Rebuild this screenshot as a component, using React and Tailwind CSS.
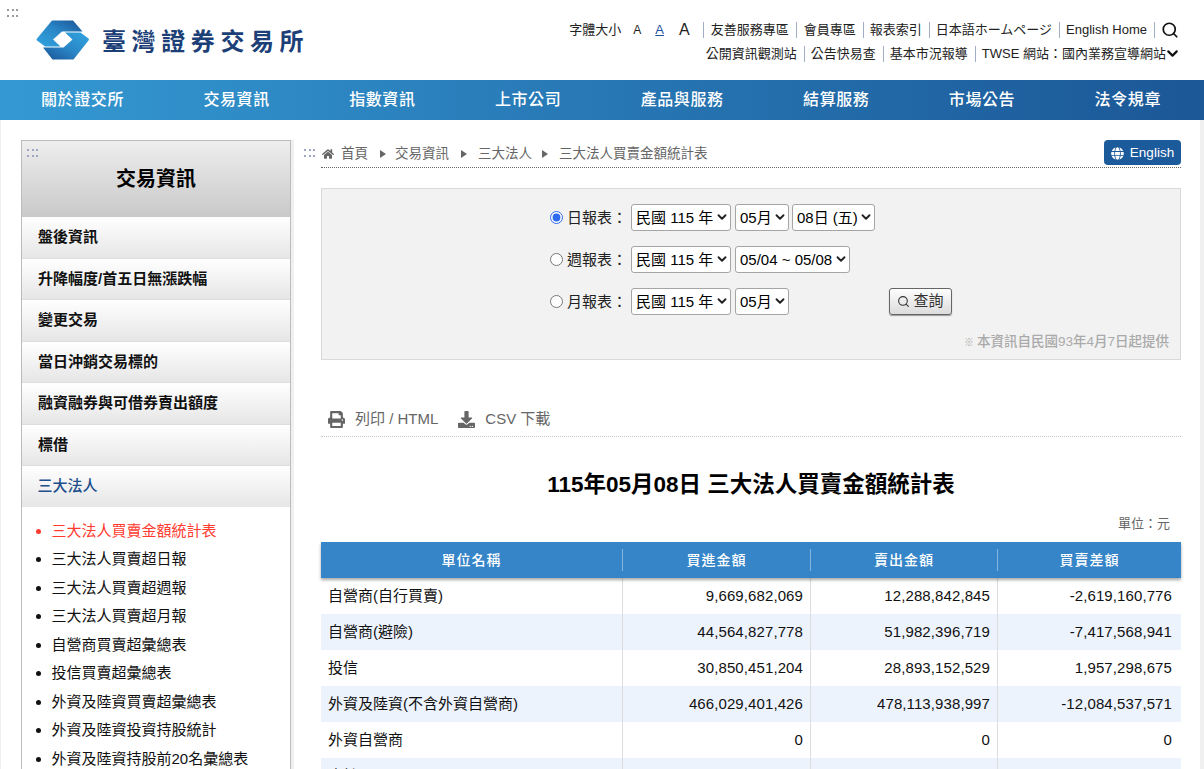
import React from "react";
import { Search, ChevronDown } from "lucide-react";
import { FaHome, FaPrint, FaDownload, FaGlobe } from "react-icons/fa";

function Dots({ color = "bg-[#9a9a9a]", className = "" }) {
  return (
    <div className={`grid grid-cols-3 gap-x-[2px] gap-y-[4px] w-[12px] ${className}`}>
      {[0, 1, 2, 3, 4, 5].map((i) => (
        <span key={i} className={`block w-[2px] h-[2px] ${color}`} />
      ))}
    </div>
  );
}

function Logo() {
  return (
    <svg width="54" height="40" viewBox="0 0 54 40" className="shrink-0">
      <defs>
        <linearGradient id="la" x1="0" y1="0.9" x2="0.85" y2="0">
          <stop offset="0" stopColor="#30a2de" />
          <stop offset="0.55" stopColor="#2a86c6" />
          <stop offset="1" stopColor="#1c5a9c" />
        </linearGradient>
        <linearGradient id="lb" x1="1" y1="0.1" x2="0.15" y2="1">
          <stop offset="0" stopColor="#30a2de" />
          <stop offset="0.55" stopColor="#2a86c6" />
          <stop offset="1" stopColor="#1c5a9c" />
        </linearGradient>
      </defs>
      <path d="M16 0.5L37 0.5L46.5 11.5L26 11.5L17 19.5L24.5 26.5L9 26.5L1 20.5Q0 19.5 1 18.5Z" fill="url(#la)" />
      <path d="M37.5 39.5L16.5 39.5L7 27.5L27.5 27.5L36.5 19.5L29 12.5L44.5 12.5L52.5 18.5Q53.5 19.5 52.5 20.5Z" fill="url(#lb)" />
    </svg>
  );
}

function Sep() {
  return <span className="block w-px h-[16px] bg-[#9fb0c6] ml-[7px] mr-[6px]" />;
}

function Sel({ children, width }) {
  return (
    <span className={`relative block h-[27px] ${width}`}>
      <select className="appearance-none block w-full h-full bg-white border border-[#a5a5a5] rounded-[3px] pl-[4px] text-[15px] leading-[25px] text-black">
        <option>{children}</option>
      </select>
      <ChevronDown size={14} strokeWidth={3.2} className="absolute right-[2px] top-[6px] text-[#222] pointer-events-none" />
    </span>
  );
}

function FormRow({ label, checked, children }) {
  return (
    <div className="flex items-center h-[27px] pl-[228px]">
      <input type="radio" name="rpt" defaultChecked={checked} className="w-[13px] h-[13px] m-0 accent-[#2f6bf0] shrink-0" />
      <span className="ml-[4px] w-[64px] pt-[1px] text-[15px] text-[#222] whitespace-nowrap">{label}</span>
      <div className="flex items-center">{children}</div>
    </div>
  );
}

const sideMain = ["盤後資訊", "升降幅度/首五日無漲跌幅", "變更交易", "當日沖銷交易標的", "融資融券與可借券賣出額度", "標借"];
const sideSub = ["三大法人買賣超日報", "三大法人買賣超週報", "三大法人買賣超月報", "自營商買賣超彙總表", "投信買賣超彙總表", "外資及陸資買賣超彙總表", "外資及陸資投資持股統計", "外資及陸資持股前20名彙總表"];
const nav = ["關於證交所", "交易資訊", "指數資訊", "上市公司", "產品與服務", "結算服務", "市場公告", "法令規章"];
const rows = [
  ["自營商(自行買賣)", "9,669,682,069", "12,288,842,845", "-2,619,160,776"],
  ["自營商(避險)", "44,564,827,778", "51,982,396,719", "-7,417,568,941"],
  ["投信", "30,850,451,204", "28,893,152,529", "1,957,298,675"],
  ["外資及陸資(不含外資自營商)", "466,029,401,426", "478,113,938,997", "-12,084,537,571"],
  ["外資自營商", "0", "0", "0"],
  ["合計", "551,114,362,477", "571,278,331,090", "-20,163,968,613"],
];
const cols = "grid grid-cols-[302px_188px_187px_183px]";

export default function App() {
  return (
    <div className="relative h-[769px] w-full overflow-hidden bg-white [font-family:'Liberation_Sans','Noto_Sans_CJK_TC',sans-serif]">
      <Dots className="absolute left-[7px] top-[9px]" />

      <header className="h-[80px] flex justify-between">
        <div className="flex items-center pl-[36px]">
          <Logo />
          <span className="ml-[12px] text-[24px] font-bold tracking-[5.6px] text-[#1c3f78] whitespace-nowrap [font-family:'Noto_Sans_CJK_TC',sans-serif]">臺灣證券交易所</span>
        </div>
        <div className="flex flex-col items-end pr-[26px] pt-[21px] text-[13px] text-[#222]">
          <div className="flex items-center h-[17px] whitespace-nowrap">
            <span>字體大小</span>
            <span className="ml-[12px] text-[12px]">A</span>
            <span className="ml-[14px] text-[13px] text-[#1f4f9c] underline">A</span>
            <span className="ml-[15px] text-[16px]">A</span>
            <span className="block w-px h-[16px] bg-[#9fb0c6] ml-[13px] mr-[7px]" />
            <span>友善服務專區</span>
            <span className="block w-px h-[16px] bg-[#9fb0c6] mx-[7px]" />
            <span>會員專區</span>
            <Sep />
            <span>報表索引</span>
            <Sep />
            <span>日本語ホームページ</span>
            <Sep />
            <span>English Home</span>
            <Sep />
            <Search size={18} strokeWidth={2.3} className="text-[#111] -mr-[1px]" />
          </div>
          <div className="flex items-center h-[17px] mt-[7px] whitespace-nowrap">
            <span>公開資訊觀測站</span>
            <Sep />
            <span>公告快易查</span>
            <Sep />
            <span>基本市況報導</span>
            <Sep />
            <span>TWSE 網站：國內業務宣導網站</span>
            <ChevronDown size={17} strokeWidth={3} className="-ml-[2px] -mr-[3px] text-[#111]" />
          </div>
        </div>
      </header>

      <nav className="h-[40px] flex items-center justify-between pl-[41px] pr-[43px] bg-gradient-to-r from-[#3499d2] to-[#1c5797] text-white text-[16px] font-medium tracking-[0.6px]">
        {nav.map((n) => (
          <span key={n} className="whitespace-nowrap">{n}</span>
        ))}
      </nav>

      <main className="h-[649px] bg-[#f0f0f0] pl-px pr-[4px]">
        <div className="h-full bg-white flex items-start pl-[20px] pt-[20px] overflow-hidden">
          <aside className="w-[270px] shrink-0 bg-white border border-b-0 border-[#bcbcbc] shadow-[3px_0_0_#f0f0f0]">
            <div className="relative h-[76px] bg-gradient-to-b from-[#eeeeee] to-[#c9c9c9] flex items-center justify-center">
              <Dots color="bg-[#a0a6c4]" className="absolute left-[5px] top-[8px]" />
              <span className="text-[20px] font-bold text-black">交易資訊</span>
            </div>
            {sideMain.map((s) => (
              <div key={s} className="h-[41.5px] flex items-center pl-[16px] border-b border-[#dddddd] bg-gradient-to-b from-[#ffffff] to-[#e6e6e6] text-[15px] font-bold text-[#111]">
                {s}
              </div>
            ))}
            <div className="h-[41px] flex items-center pl-[15.5px] bg-gradient-to-b from-[#ffffff] to-[#e6e6e6] text-[15px] font-medium text-[#1c4f8c]">
              三大法人
            </div>
            <ul className="pt-[9.5px] text-[15px]">
              <li className="relative h-[28.5px] leading-[28.5px] pl-[29.5px] text-[#ff3b30]">
                <span className="absolute left-[14px] top-[12px] w-[5px] h-[5px] rounded-full bg-[#ff3b30]" />
                三大法人買賣金額統計表
              </li>
              {sideSub.map((s) => (
                <li key={s} className="relative h-[28.5px] leading-[28.5px] pl-[29.5px] text-[#111]">
                  <span className="absolute left-[14px] top-[12px] w-[5px] h-[5px] rounded-full bg-[#111]" />
                  {s}
                </li>
              ))}
            </ul>
          </aside>

          <section className="w-[860px] shrink-0 ml-[30px]">
            <div className="relative h-[28px] flex items-start justify-between border-b border-dotted border-[#666]">
              <Dots color="bg-[#a0a6c4]" className="absolute left-[-17px] top-[9px]" />
              <div className="flex items-center h-[27px] pt-[1px] text-[13.5px] text-[#666]">
                <FaHome size={12} className="ml-[1px] text-[#666]" />
                <span className="ml-[7px]">首頁</span>
                <span className="ml-[12px] w-0 h-0 border-y-[4px] border-y-transparent border-l-[6px] border-l-[#666]" />
                <span className="ml-[9px]">交易資訊</span>
                <span className="ml-[12px] w-0 h-0 border-y-[4px] border-y-transparent border-l-[6px] border-l-[#666]" />
                <span className="ml-[11px]">三大法人</span>
                <span className="ml-[10px] w-0 h-0 border-y-[4px] border-y-transparent border-l-[6px] border-l-[#666]" />
                <span className="ml-[11px]">三大法人買賣金額統計表</span>
              </div>
              <div className="w-[77px] h-[25px] pt-[1px] bg-[#1b5a9b] rounded-[4px] flex items-center justify-center gap-[6px] text-white text-[13.5px] font-medium">
                <FaGlobe size={13} />
                <span>English</span>
              </div>
            </div>

            <div className="mt-[20px] h-[172px] bg-[#f2f2f2] border border-[#d9d9d9] pt-[15px] pr-[11px]">
              <div className="flex flex-col gap-[15px]">
                <FormRow label="日報表：" checked>
                  <Sel width="w-[100px]">民國 115 年</Sel>
                  <span className="w-[4px]" />
                  <Sel width="w-[54px]">05月</Sel>
                  <span className="w-[3px]" />
                  <Sel width="w-[83px]">08日 (五)</Sel>
                </FormRow>
                <FormRow label="週報表：">
                  <Sel width="w-[100px]">民國 115 年</Sel>
                  <span className="w-[4px]" />
                  <Sel width="w-[115px]">05/04 ~ 05/08</Sel>
                </FormRow>
                <FormRow label="月報表：">
                  <Sel width="w-[100px]">民國 115 年</Sel>
                  <span className="w-[4px]" />
                  <Sel width="w-[54px]">05月</Sel>
                  <button className="ml-[100px] w-[63px] h-[27px] flex items-center justify-center gap-[3px] rounded-[3px] border border-[#666] bg-gradient-to-b from-[#fdfdfd] to-[#dcdcdc] shadow-[0_1px_1px_#999] text-[15px] text-[#333]">
                    <Search size={13} strokeWidth={2} />
                    <span>查詢</span>
                  </button>
                </FormRow>
              </div>
              <p className="mt-[18px] text-right text-[13.5px] leading-[18px] font-medium text-[#aaaaaa]">
                <span className="text-[10px] mr-[3px]">※</span>本資訊自民國93年4月7日起提供
              </p>
            </div>

            <div className="mt-[42px] h-[35px] flex items-center border-b border-dotted border-[#c8c8c8] text-[15px] text-[#666]">
              <FaPrint size={17} className="ml-[7px] text-[#666]" />
              <span className="ml-[10px]">列印 / HTML</span>
              <FaDownload size={17} className="ml-[20px] text-[#666]" />
              <span className="ml-[10px]">CSV 下載</span>
            </div>

            <h1 className="mt-[32px] h-[32px] leading-[32px] text-center text-[22.5px] font-bold text-black">115年05月08日 三大法人買賣金額統計表</h1>
            <div className="mt-[14px] h-[18px] leading-[18px] text-right pr-[11px] text-[13px] text-[#666]">單位：元</div>

            <div className={`${cols} mt-[9px] h-[36px] relative z-10 bg-[#3585c8] text-white text-[14px] font-medium tracking-[1px] shadow-[0_2px_3px_rgba(0,0,0,0.35)] items-center text-center`}>
              {["單位名稱", "買進金額", "賣出金額", "買賣差額"].map((h, i) => (
                <div key={h} className={`h-[22px] leading-[22px] ${i < 3 ? "border-r border-white/40" : ""}`}>{h}</div>
              ))}
            </div>
            {rows.map((r, i) => (
              <div key={r[0]} className={`${cols} h-[36px] ${i % 2 ? "bg-[#edf3fd]" : "bg-white"} text-[#111]`}>
                <div className="border-r border-[#dddddd] leading-[36px] pl-[7px] text-[15px]">{r[0]}</div>
                {r.slice(1).map((v, j) => (
                  <div key={j} className={`${j < 2 ? "border-r border-[#dddddd] pr-[7px]" : "pr-[9px]"} leading-[36px] text-right text-[15px] tracking-[0.1px]`}>{v}</div>
                ))}
              </div>
            ))}
          </section>
        </div>
      </main>
    </div>
  );
}
